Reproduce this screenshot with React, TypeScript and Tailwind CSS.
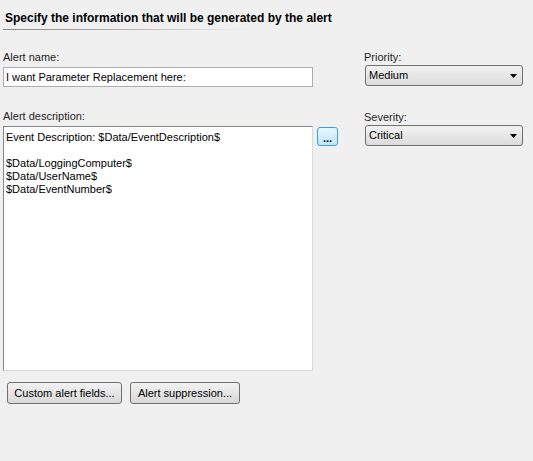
import { ReactNode } from "react";

function Label({ children }: { children: ReactNode }) {
    return <div className="text-[11px] leading-[14px] text-[#1e1e1e]">{children}</div>;
}

function Dropdown({ value }: { value: string }) {
    return (
        <div className="flex items-center justify-between h-[21px] w-[158px] rounded-[3px] border border-[#707070] bg-gradient-to-b from-[#f2f2f2] to-[#dcdcdc] pl-[3px] pr-[5px]">
            <span className="text-[11px] text-black">{value}</span>
            <svg width="7" height="4" viewBox="0 0 7 4">
                <path d="M0 0h7L3.5 4z" fill="#000" />
            </svg>
        </div>
    );
}

function PushButton({ children, width }: { children: ReactNode; width: string }) {
    return (
        <div className={`flex items-center justify-center h-[22px] rounded-[3px] border border-[#707070] bg-gradient-to-b from-[#f2f2f2] to-[#d8d8d8] text-[11px] text-black ${width}`}>
            {children}
        </div>
    );
}

export default function App() {
    return (
        <div className="w-[533px] h-[461px] bg-[#f0f0f0] overflow-hidden" style={{ fontFamily: "'Liberation Sans', Arial, sans-serif" }}>
            <div className="pt-[11px] pl-[5px] text-[12px] font-bold leading-[14px] text-black">
                Specify the information that will be generated by the alert
            </div>
            <div className="mt-[4px] ml-[3px] h-px w-[245px] bg-gradient-to-r from-[#8a8a8a] via-[#b0b0b0] to-transparent" />

            <div className="flex mt-[20px]">
                <div className="pl-[3px] w-[364px]">
                    <Label>Alert name:</Label>
                    <div className="mt-[3px] h-[20px] w-[310px] border border-[#abadb3] border-t-[#acacac] bg-white flex items-center pl-[2px] text-[11px] text-black">
                        I want Parameter Replacement here:
                    </div>

                    <div className="mt-[22px]">
                        <Label>Alert description:</Label>
                    </div>
                    <div className="flex gap-[4px] mt-[3px]">
                        <div className="h-[245px] w-[310px] border border-[#828790] border-r-[#dadada] border-b-[#dadada] bg-white pl-[2px] pt-[4px] text-[11px] leading-[13px] text-black">
                            <div>Event Description: $Data/EventDescription$</div>
                            <div>&nbsp;</div>
                            <div>$Data/LoggingComputer$</div>
                            <div>$Data/UserName$</div>
                            <div>$Data/EventNumber$</div>
                        </div>
                        <div className="mt-[1px] h-[19px] w-[21px] rounded-[3px] border border-[#3c9fe0] bg-gradient-to-b from-[#eaf6fd] to-[#bee6fd] flex items-end justify-center pb-[3px]">
                            <span className="text-[11px] leading-[8px] font-bold text-black">...</span>
                        </div>
                    </div>

                    <div className="flex gap-[8px] mt-[11px] pl-[4px]">
                        <PushButton width="w-[115px]">Custom alert fields...</PushButton>
                        <PushButton width="w-[110px]">Alert suppression...</PushButton>
                    </div>
                </div>

                <div>
                    <Label>Priority:</Label>
                    <div className="mt-[1px] ml-[1px]">
                        <Dropdown value="Medium" />
                    </div>
                    <div className="mt-[24px]">
                        <Label>Severity:</Label>
                    </div>
                    <div className="mt-[1px] ml-[1px]">
                        <Dropdown value="Critical" />
                    </div>
                </div>
            </div>
        </div>
    );
}
